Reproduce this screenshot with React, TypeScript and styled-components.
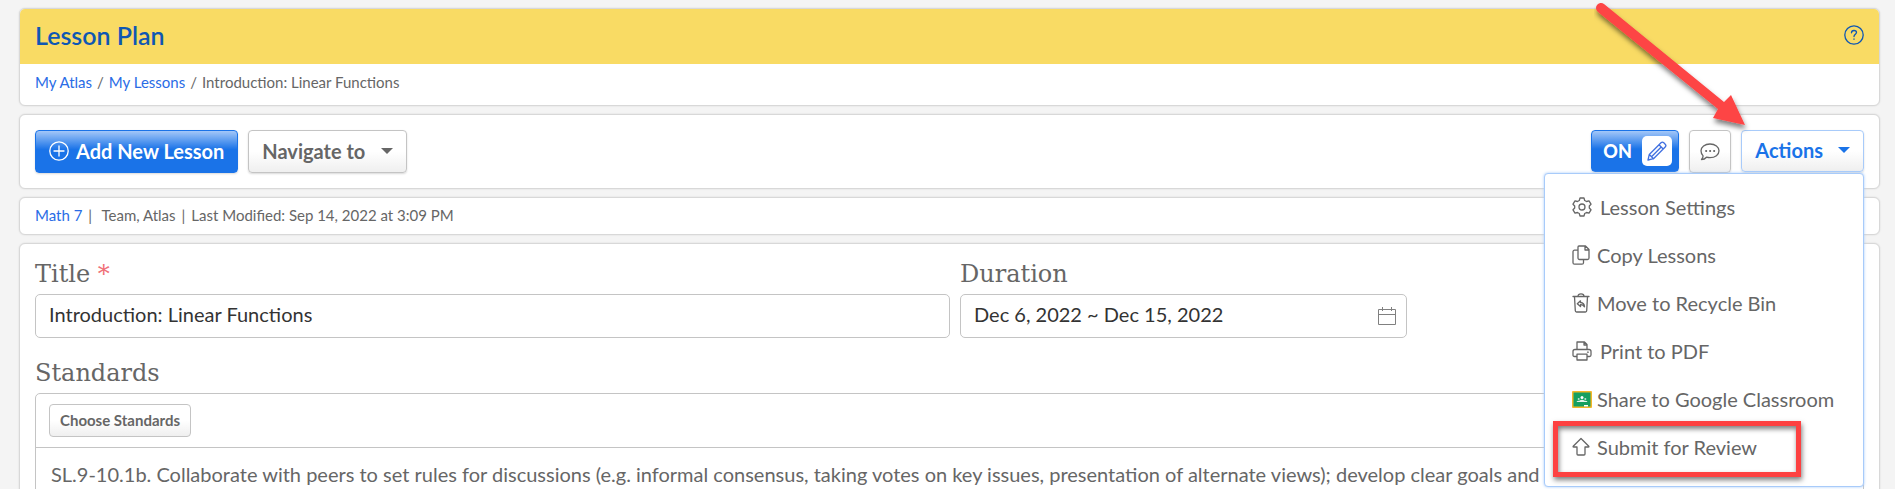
import React from 'react';
import styled, { createGlobalStyle, css } from 'styled-components';

const GlobalStyle = createGlobalStyle`
  *, *::before, *::after { box-sizing: border-box; }
  body {
    margin: 0;
    background: #f4f4f4;
    color: #666;
    font: 400 15px/20px Lato, "Open Sans", sans-serif;
  }
  a { color: #2a6ce6; text-decoration: none; }
  button, input { font-family: inherit; }
`;

const Page = styled.main`
  position: relative;
  display: flex;
  flex-direction: column;
  gap: 8px;
  height: 100vh;
  padding: 8px 15px 0 19px;
  overflow: hidden;
`;

const Card = styled.section`
  flex: none;
  background: #fff;
  border: 1px solid #d8d8d8;
  border-radius: 6px;
  box-shadow: 0 0 2px rgba(0, 0, 0, 0.12);
`;

const TitleBar = styled.header`
  display: flex;
  align-items: center;
  justify-content: space-between;
  height: 55px;
  padding: 0 15px 4px;
  background: #f9db64;
  border-radius: 5px 5px 0 0;
`;

const PageTitle = styled.h1`
  margin: 0;
  color: #0f57b3;
  font-size: 25px;
  line-height: 28px;
  font-weight: 600;
`;

const HelpButton = styled.button`
  display: flex;
  padding: 0;
  border: 0;
  background: none;
  color: #0f57b3;
`;

const Breadcrumbs = styled.nav`
  display: flex;
  gap: 5px;
  padding: 8px 15px 13px;
`;

const Toolbar = styled(Card)`
  position: relative;
  z-index: 2;
  display: flex;
  align-items: center;
  justify-content: space-between;
  padding: 15px;
`;

const ToolGroup = styled.div`
  display: flex;
  gap: 10px;
`;

const Button = styled.button<{ $tone?: 'primary' | 'outline' | 'plain'; $small?: boolean }>`
  display: flex;
  align-items: center;
  justify-content: center;
  gap: 7px;
  height: 43px;
  padding: 0 13px 2px;
  border: 1px solid #c4c4c4;
  border-radius: 4px;
  background: linear-gradient(#fff 50%, #efefef);
  box-shadow: 0 1px 2px rgba(0, 0, 0, 0.15);
  color: #666;
  font-size: 20px;
  line-height: 24px;
  font-weight: 700;
  ${(p) => p.$tone === 'primary' && css`
    border-color: #1a73e8;
    background: linear-gradient(#a3c7f8, #1a73e8 45%);
    color: #fff;
  `}
  ${(p) => p.$tone === 'outline' && css`
    gap: 6px;
    height: 42px;
    border-color: #a8cbfa;
    color: #1a73e8;
  `}
  ${(p) => p.$small && css`
    height: 33px;
    padding: 0 10px 2px;
    font-size: 15px;
    line-height: 20px;
    box-shadow: none;
  `}
`;

const IconButton = styled(Button)`
  width: 42px;
  padding: 0;
`;

const Caret = styled.span`
  margin: 0 0 0 9px;
  border: 6px solid transparent;
  border-top-color: currentColor;
  border-bottom: 0;
`;

const Switch = styled.label`
  position: relative;
  display: flex;
  align-items: center;
  justify-content: space-between;
  width: 88px;
  height: 42px;
  padding: 0 6px 0 11px;
  border: 1px solid #1a73e8;
  border-radius: 4px;
  background: linear-gradient(#a3c7f8, #1a73e8 45%);
  box-shadow: 0 1px 2px rgba(0, 0, 0, 0.15);
  color: #fff;
  font-size: 18px;
  font-weight: 900;
`;

const SwitchInput = styled.input`
  position: absolute;
  inset: 0;
  margin: 0;
  opacity: 0;
`;

const SwitchKnob = styled.span`
  display: flex;
  align-items: center;
  justify-content: center;
  width: 30px;
  height: 30px;
  border-radius: 5px;
  background: #fff;
  color: #3f6fe0;
`;

const MenuAnchor = styled.div`
  position: relative;
`;

const Menu = styled.ul`
  position: absolute;
  top: 100%;
  right: 0;
  width: 320px;
  margin: 0;
  padding: 9px 0 15px;
  list-style: none;
  background: #fff;
  border: 1px solid #a8cbfa;
  border-radius: 4px;
  box-shadow: 0 0 3px #a8cbfa;
`;

const MenuItem = styled.li`
  position: relative;
`;

const MenuButton = styled.button`
  display: flex;
  align-items: center;
  gap: 7px;
  width: 100%;
  height: 48px;
  padding: 0 27px;
  border: 0;
  background: none;
  color: #666;
  font-size: 20px;
  line-height: 24px;
  white-space: nowrap;
`;

const Highlight = styled.span`
  position: absolute;
  top: -2px;
  left: 8px;
  width: 248px;
  height: 56px;
  border: 5px solid #fd4141;
  box-shadow: 1px 3px 5px rgba(0, 0, 0, 0.5), inset 1px 3px 5px rgba(0, 0, 0, 0.5);
  pointer-events: none;
`;

const Arrow = styled.svg`
  position: absolute;
  z-index: 3;
  top: 0;
  right: 141px;
  pointer-events: none;
`;

const MetaLine = styled(Card)`
  display: flex;
  gap: 6px;
  padding: 7px 15px 9px;
  white-space: pre;
`;

const Form = styled(Card)`
  flex: 1 0 auto;
  padding: 14px 15px 0;
`;

const Fields = styled.div`
  display: grid;
  grid-template-columns: 915fr 447fr 447fr;
  gap: 10px;
  margin-bottom: 19px;
`;

const Field = styled.div`
  position: relative;
`;

const labelText = css`
  display: block;
  margin: 0 0 4px;
  color: #666;
  font: 400 24px/32px "DejaVu Serif", "Liberation Serif", serif;
`;

const Label = styled.label`${labelText}`;
const Heading = styled.h2`${labelText}`;

const Required = styled.span`
  color: #f07078;
`;

const TextInput = styled.input`
  display: block;
  width: 100%;
  height: 44px;
  padding: 0 13px 4px;
  border: 1px solid #c4c4c4;
  border-radius: 5px;
  background: #fff;
  color: #333;
  font-size: 20px;
`;

const CalendarIcon = styled.svg`
  position: absolute;
  right: 10px;
  bottom: 12px;
`;

const StandardsBox = styled.div`
  height: 120px;
  border: 1px solid #c4c4c4;
  border-radius: 5px 5px 0 0;
`;

const StandardsBar = styled.div`
  display: flex;
  padding: 10px 13px;
  border-bottom: 1px solid #c4c4c4;
`;

const StandardText = styled.p`
  margin: 0;
  padding: 14px 15px;
  font-size: 20px;
  line-height: 24px;
  white-space: nowrap;
`;

type IconProps = { w?: number; h?: number; children: React.ReactNode };
const Icon = ({ w = 20, h = 20, children }: IconProps) => (
  <svg width={w} height={h} viewBox={`0 0 ${w} ${h}`} fill="none" stroke="currentColor" strokeWidth="1.3" strokeLinejoin="round" strokeLinecap="round" aria-hidden="true">
    {children}
  </svg>
);

const menuItems = [
  {
    label: 'Lesson Settings',
    wide: true,
    icon: (
      <Icon>
        <path d="M8 1h4l.7 2.500 1.800 1 2.500-.7 2 3.400L17.300 9v2l1.700 1.800-2 3.400-2.500-.7-1.800 1L12 19H8l-.7-2.500-1.800-1-2.500.7-2-3.400L2.700 11V9L1 7.200l2-3.400 2.500.7 1.800-1z" />
        <circle cx="10" cy="10" r="3" />
      </Icon>
    ),
  },
  {
    label: 'Copy Lessons',
    icon: (
      <Icon w={18}>
        <path d="M7 1h6.500l3.500 3.500V13a1.500 1.500 0 0 1-1.500 1.500H7.500A1.500 1.500 0 0 1 6 13V2a1 1 0 0 1 1-1zM13 1.200V5h3.800M6 5.200H2.500A1.500 1.500 0 0 0 1 6.700v11a1.500 1.500 0 0 0 1.500 1.500H10a1.500 1.500 0 0 0 1.500-1.500v-3" />
      </Icon>
    ),
  },
  {
    label: 'Move to Recycle Bin',
    icon: (
      <Icon w={18}>
        <path d="M1 3.500h16M2.500 3.500l.8 14.300q.1 1.200 1.200 1.200h9q1.100 0 1.200-1.200l.8-14.300M6 3.200Q6 .8 9 .8t3 2.400M8.500 7.800L5.300 10.700l3.200 2.900v-1.900q2.500-.2 4 2.100-.1-4-4-4.300z" />
      </Icon>
    ),
  },
  {
    label: 'Print to PDF',
    wide: true,
    icon: (
      <Icon>
        <path d="M5 8.500V1h7.500L15 3.500v5M12 1.200V4h2.800M5 15.500H2.500Q1 15.500 1 14v-3.500Q1 8.500 3 8.500h14q2 0 2 2V14q0 1.500-1.500 1.500H15M5 13.200h10V19H5zM15.500 11.200h.8" />
      </Icon>
    ),
  },
  {
    label: 'Share to Google Classroom',
    icon: (
      <svg width="20" height="17" viewBox="0 0 20 17" style={{ flex: 'none' }} aria-hidden="true">
        <rect width="20" height="17" rx="1" fill="#f4b728" />
        <rect x="1.500" y="1.500" width="17" height="14" fill="#15a060" />
        <circle cx="10" cy="6.600" r="1.500" fill="#fff" />
        <circle cx="6.700" cy="8" r="1" fill="#bfe3d1" />
        <circle cx="13.300" cy="8" r="1" fill="#bfe3d1" />
        <path d="M4.500 11q.5-1.500 2.800-1.300 2.700-1.800 5.400 0 2.300-.2 2.800 1.300z" fill="#e4f4ec" />
        <path d="M12 14h4v1.500h-4z" fill="#fff" />
      </svg>
    ),
  },
  {
    label: 'Submit for Review',
    highlighted: true,
    icon: (
      <Icon w={18}>
        <path d="M9 1.500L1.200 9.300q-.5.700.5.700H5v7q0 1 1 1h6q1 0 1-1v-7h3.300q1 0 .5-.7z" />
      </Icon>
    ),
  },
];

const ItemIcon = styled.span<{ $wide?: boolean }>`
  display: flex;
  align-items: center;
  flex: none;
  width: ${(p) => (p.$wide ? 21 : 18)}px;
`;

export default function App() {
  return (
    <>
      <GlobalStyle />
      <Page>
        <Card>
          <TitleBar>
            <PageTitle>Lesson Plan</PageTitle>
            <HelpButton aria-label="Help">
              <Icon>
                <circle cx="10" cy="10" r="9.200" />
                <path d="M7.500 7.800Q7.500 5.500 10 5.500t2.500 2.100c0 1.600-2.500 1.900-2.500 3.900M10 14v.3" />
              </Icon>
            </HelpButton>
          </TitleBar>
          <Breadcrumbs aria-label="Breadcrumb">
            <a href="#atlas">My Atlas</a>
            <span>/</span>
            <a href="#lessons">My Lessons</a>
            <span>/</span>
            <span>Introduction: Linear Functions</span>
          </Breadcrumbs>
        </Card>

        <Toolbar>
          <ToolGroup>
            <Button $tone="primary">
              <Icon>
                <circle cx="10" cy="10" r="9.200" />
                <path d="M10 5v10M5 10h10" />
              </Icon>
              Add New Lesson
            </Button>
            <Button>
              Navigate to
              <Caret />
            </Button>
          </ToolGroup>
          <ToolGroup>
            <Switch>
              <SwitchInput type="checkbox" defaultChecked />
              ON
              <SwitchKnob>
                <Icon>
                  <path d="M1 19l1.300-5.500L14 1.800q1.400-1.400 2.800 0L18.200 3.200q1.400 1.400 0 2.800L6.500 17.700zM2.300 13.500l4.200 4.200M12 3.800L16.200 8M4.800 15.500L14.200 6" />
                </Icon>
              </SwitchKnob>
            </Switch>
            <IconButton aria-label="Comments">
              <Icon>
                <path d="M10 2c5.200 0 9 3 9 6.800s-3.800 6.900-9 6.900q-1.800 0-3.500-.5Q4.500 17.500 1.500 17.500q1.500-1.500 1.600-3.600Q1 11.800 1 8.800C1 5 4.800 2 10 2z" />
                <path d="M6 9h.3M10 9h.3M14 9h.3" strokeWidth="1.800" />
              </Icon>
            </IconButton>
            <MenuAnchor>
              <Button $tone="outline" aria-haspopup="menu" aria-expanded="true">
                Actions
                <Caret />
              </Button>
              <Menu>
                {menuItems.map((item) => (
                  <MenuItem key={item.label}>
                    <MenuButton>
                      <ItemIcon $wide={item.wide}>{item.icon}</ItemIcon>
                      {item.label}
                    </MenuButton>
                    {item.highlighted && <Highlight />}
                  </MenuItem>
                ))}
              </Menu>
            </MenuAnchor>
          </ToolGroup>
        </Toolbar>

        <MetaLine>
          <a href="#math7">Math 7</a>
          <span>|</span>
          <span> Team, Atlas</span>
          <span>|</span>
          <span>Last Modified: Sep 14, 2022 at 3:09 PM</span>
        </MetaLine>

        <Form as="form">
          <Fields>
            <Field>
              <Label htmlFor="title">
                Title <Required>*</Required>
              </Label>
              <TextInput id="title" defaultValue="Introduction: Linear Functions" />
            </Field>
            <Field>
              <Label htmlFor="duration">Duration</Label>
              <TextInput id="duration" defaultValue="Dec 6, 2022 ~ Dec 15, 2022" />
              <CalendarIcon width="20" height="20" viewBox="0 0 20 20" fill="none" stroke="#808080" aria-hidden="true">
                <path d="M1.500 3.500h17v15h-17zM1.500 8.500h17M5.500 1v4M14.500 1v4" />
              </CalendarIcon>
            </Field>
          </Fields>
          <Heading>Standards</Heading>
          <StandardsBox>
            <StandardsBar>
              <Button type="button" $small>
                Choose Standards
              </Button>
            </StandardsBar>
            <StandardText>
              SL.9-10.1b. Collaborate with peers to set rules for discussions (e.g. informal consensus, taking votes on key issues, presentation of alternate views); develop clear goals and
            </StandardText>
          </StandardsBox>
        </Form>

        <Arrow width="160" height="140" viewBox="0 0 160 140" aria-hidden="true">
          <defs>
            <filter id="arrowShadow" x="-20%" y="-20%" width="140%" height="140%">
              <feDropShadow dx="1" dy="4" stdDeviation="2.500" floodOpacity="0.5" />
            </filter>
          </defs>
          <path d="M4 12L124 109 119 118 151 125 137 95 130 102 10 4A5 5 0 0 0 4 12z" fill="#fd4444" filter="url(#arrowShadow)" />
        </Arrow>
      </Page>
    </>
  );
}
